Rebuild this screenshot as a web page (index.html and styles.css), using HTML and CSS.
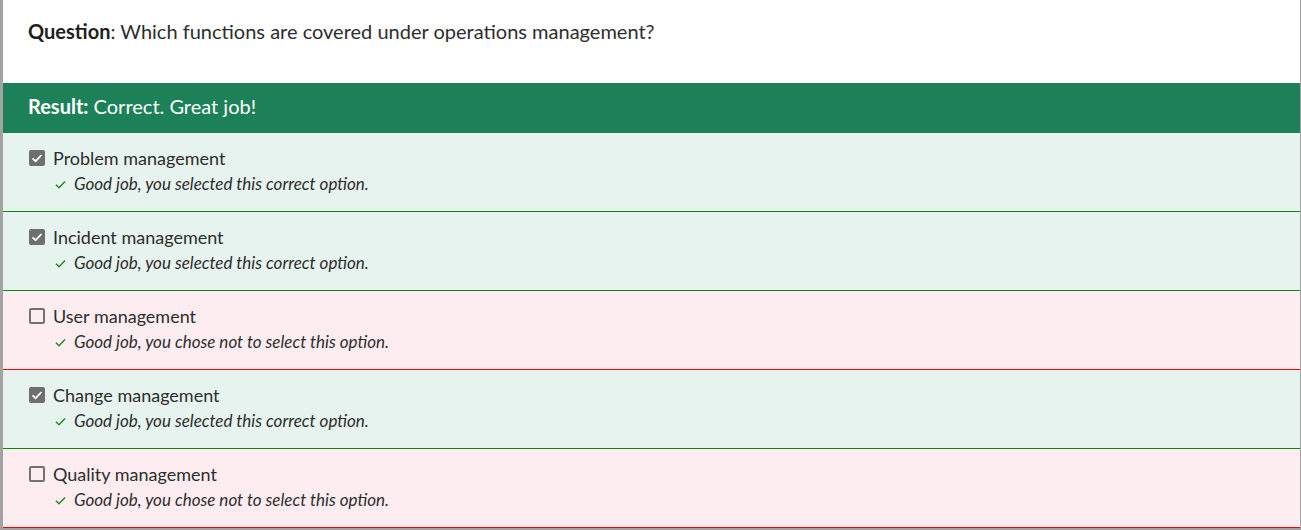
FILE: index.html
```html
<!DOCTYPE html>
<html>
<head>
<meta charset="utf-8">
<link rel="stylesheet" href="styles.css">
</head>
<body>
<div class="quiz">
  <div class="question"><b>Question</b>: Which functions are covered under operations management?</div>
  <div class="result"><b>Result:</b> Correct. Great job!</div>
  <div class="option ok">
    <div class="label"><span class="box checked"><svg viewBox="0 0 16 16" width="16" height="16"><polyline points="3.5,8.3 6.6,11.2 12.5,5" fill="none" stroke="#fff" stroke-width="1.8"/></svg></span>Problem management</div>
    <div class="fb"><svg class="tick" viewBox="0 0 11 9" width="11" height="9"><polyline points="1,4.8 4,7.8 10,1.5" fill="none" stroke="#1a8a1a" stroke-width="1.4"/></svg>Good job, you selected this correct option.</div>
  </div>
  <div class="option ok">
    <div class="label"><span class="box checked"><svg viewBox="0 0 16 16" width="16" height="16"><polyline points="3.5,8.3 6.6,11.2 12.5,5" fill="none" stroke="#fff" stroke-width="1.8"/></svg></span>Incident management</div>
    <div class="fb"><svg class="tick" viewBox="0 0 11 9" width="11" height="9"><polyline points="1,4.8 4,7.8 10,1.5" fill="none" stroke="#1a8a1a" stroke-width="1.4"/></svg>Good job, you selected this correct option.</div>
  </div>
  <div class="option bad">
    <div class="label"><span class="box"></span>User management</div>
    <div class="fb"><svg class="tick" viewBox="0 0 11 9" width="11" height="9"><polyline points="1,4.8 4,7.8 10,1.5" fill="none" stroke="#1a8a1a" stroke-width="1.4"/></svg>Good job, you chose not to select this option.</div>
  </div>
  <div class="option ok">
    <div class="label"><span class="box checked"><svg viewBox="0 0 16 16" width="16" height="16"><polyline points="3.5,8.3 6.6,11.2 12.5,5" fill="none" stroke="#fff" stroke-width="1.8"/></svg></span>Change management</div>
    <div class="fb"><svg class="tick" viewBox="0 0 11 9" width="11" height="9"><polyline points="1,4.8 4,7.8 10,1.5" fill="none" stroke="#1a8a1a" stroke-width="1.4"/></svg>Good job, you selected this correct option.</div>
  </div>
  <div class="option bad">
    <div class="label"><span class="box"></span>Quality management</div>
    <div class="fb"><svg class="tick" viewBox="0 0 11 9" width="11" height="9"><polyline points="1,4.8 4,7.8 10,1.5" fill="none" stroke="#1a8a1a" stroke-width="1.4"/></svg>Good job, you chose not to select this option.</div>
  </div>
</div>
</body>
</html>
```
FILE: styles.css
```css
html, body {
  margin: 0;
  padding: 0;
  background: #fff;
}
body {
  font-family: Lato, "Open Sans", sans-serif;
  color: #2d2d2d;
}
.quiz {
  width: 1297px;
  border-left: 3px solid #a3a3a3;
  border-right: 1px solid #a3a3a3;
  border-bottom: 2px solid #a3a3a3;
}
.question {
  height: 83px;
  box-sizing: border-box;
  padding: 18px 25px 0;
  font-size: 20px;
  line-height: 26px;
  background: #fff;
}
.question b {
  font-weight: 700;
  color: #1e1e1e;
}
.result {
  height: 50px;
  box-sizing: border-box;
  background: #1c8059;
  color: #fff;
  padding: 10px 25px 0;
  font-size: 20px;
  line-height: 26px;
}
.result b {
  font-weight: 700;
}
.option {
  height: 79px;
  box-sizing: border-box;
  padding: 13px 26px 0;
}
.option.ok {
  background: #e6f3ee;
  border-bottom: 1px solid #0a8a0a;
}
.option.bad {
  background: #fdedf0;
  border-bottom: 1px solid #ff0000;
}
.label {
  display: flex;
  align-items: center;
  gap: 8px;
  font-size: 18px;
  line-height: 24px;
  color: #2d2d2d;
}
.box {
  width: 16px;
  height: 16px;
  box-sizing: border-box;
  border: 2px solid #717171;
  border-radius: 2px;
  display: flex;
  align-items: center;
  justify-content: center;
}
.box.checked {
  background: #6f6f6f;
  border: none;
}
.fb {
  display: flex;
  align-items: center;
  margin-top: 1px;
  padding-left: 26px;
  gap: 8px;
  font-size: 17px;
  font-style: italic;
  line-height: 26px;
  color: #2d2d2d;
}
.tick {
  margin-top: 1px;
}
```
